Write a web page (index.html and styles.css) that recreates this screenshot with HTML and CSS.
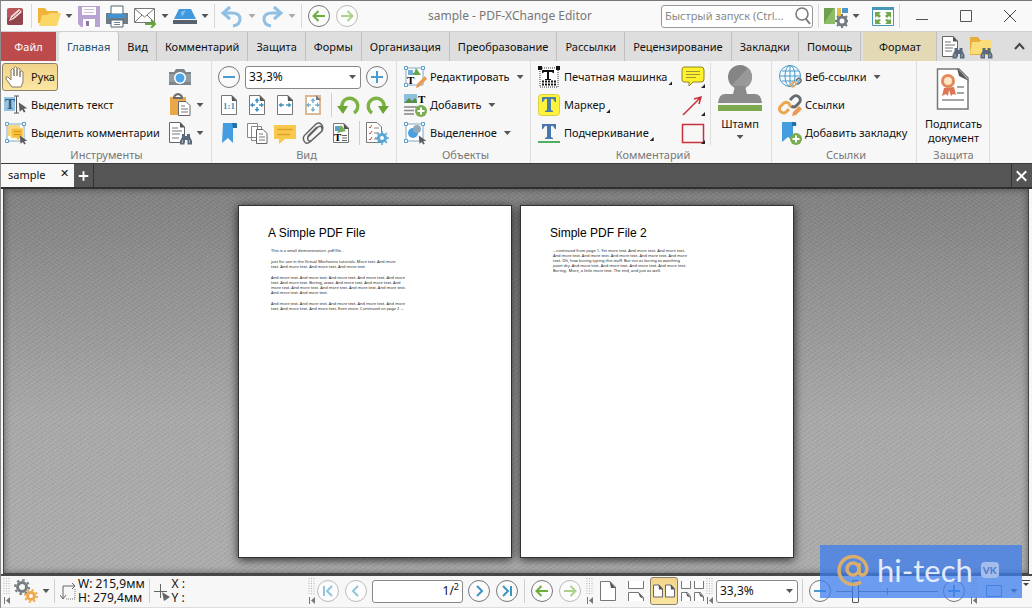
FILE: index.html
```html
<!DOCTYPE html>
<html lang="ru">
<head>
<meta charset="utf-8">
<title>sample - PDF-XChange Editor</title>
<link rel="stylesheet" href="styles.css">
</head>
<body>
<svg class="defs" aria-hidden="true">
  <defs>
    <symbol id="doc" viewBox="0 0 24 24"><path d="M4.500 2.500H15L19.500 7V21.500H4.500Z" fill="#fff" stroke="#777"/><path d="M14.500 2L20 8H15Z" fill="#555"/></symbol>
    <symbol id="bino" viewBox="0 0 12 12"><path d="M2 1h3v2h2V1h3v3l2 4v3.500H7.500V7h-3v4.500H0V8l2-4z" fill="#596a7b"/><path d="M2 7h1v3H2zM9 7h1v3H9z" fill="#a4b0bb"/></symbol>
    <symbol id="cursor" viewBox="0 0 12 12"><path d="M1 0L11 7L7 7.500L9 11L7 12L5 8.500L2 11Z" fill="#5c5c60"/></symbol>
    <symbol id="frame" viewBox="0 0 24 24"><path d="M3 3H20V20H3Z" fill="#fff" stroke="#7ca8c4"/><path d="M1.500 1.500h3v3h-3zM18.500 1.500h3v3h-3zM1.500 18.500h3v3h-3z" fill="#fff" stroke="#5b9fca"/></symbol>
    <symbol id="plusbadge" viewBox="0 0 12 12"><circle cx="6" cy="6" r="6" fill="#79ad50"/><path d="M6 2.500v7M2.500 6h7" stroke="#fff" stroke-width="2"/></symbol>
    <symbol id="minus" viewBox="0 0 24 24"><circle cx="12" cy="12" r="10.500" fill="#fafafa" stroke="#777"/><path d="M6 12h12" stroke="#4b9bd3" stroke-width="2"/></symbol>
    <symbol id="plus" viewBox="0 0 24 24"><circle cx="12" cy="12" r="10.500" fill="#fafafa" stroke="#777"/><path d="M6 12h12M12 6v12" stroke="#4b9bd3" stroke-width="2"/></symbol>
    <symbol id="back" viewBox="0 0 24 24"><circle cx="12" cy="12" r="10.500" fill="#fcfcfc" stroke="#777"/><path d="M18 12H7M11.500 7L6.500 12l5 5" fill="none" stroke="#6cae3b" stroke-width="2"/></symbol>
    <symbol id="fwd" viewBox="0 0 24 24"><circle cx="12" cy="12" r="10.500" fill="#fcfcfc" stroke="#bbb"/><path d="M6 12h11M12.500 7l5 5l-5 5" fill="none" stroke="#abd28c" stroke-width="2"/></symbol>
    <symbol id="grip" viewBox="0 0 8 30"><path d="M1 2v17M3.500 2v17M6 2v17" stroke="#b5b5b5" stroke-dasharray="1 1.500"/><path d="M1.500 21v7" stroke="#777"/><path d="M7 21v7L3 24.500z" fill="#777"/></symbol>
    <symbol id="arrows4" viewBox="0 0 24 24"><path d="M12 6v4M12 14v4M6 12h4M14 12h4" stroke="#3d91bd" stroke-width="1.500"/><path d="M9.500 8L12 5l2.500 3zM9.500 16L12 19l2.500-3zM8 9.500L5 12l3 2.500zM16 9.500l3 2.500l-3 2.500z" fill="#3d91bd"/></symbol>
    <symbol id="link" viewBox="0 0 24 24"><g fill="none" stroke-width="3"><path d="M12 7l3-3a4 4 0 0 1 6 6l-3 3a4 4 0 0 1-5 0" stroke="#66696d"/><path d="M11 16l-3 3a4 4 0 0 1-6-5l4-4a4 4 0 0 1 6 4" stroke="#eba652"/></g></symbol>
    <symbol id="page-s" viewBox="0 0 12 15"><path d="M1.500 1.500H7L10.500 5V13.500H1.500Z" fill="#fff" stroke="#666"/><path d="M6.500 1L11 6H7z" fill="#555"/></symbol>
  </defs>
</svg>
<div class="window">
  <header class="titlebar">
    <div class="quick">
      <svg class="i" viewBox="0 0 24 24"><rect x="1" y="4" width="16" height="17" rx="2" fill="#b9565a"/><path d="M1 15L17 6V19a2 2 0 0 1-2 2H3a2 2 0 0 1-2-2z" fill="#93444a"/><path d="M3 17l2-5l8-7l3 3l-8 7z" fill="#f1dcdd"/><path d="M5.500 14.500L14 7" stroke="#a84b50"/></svg>
      <span class="sep"></span>
      <button class="b" aria-label="Открыть"><svg class="i" viewBox="0 0 24 24"><path d="M1 4h7l2 3h11v12H1z" fill="#f1b33a"/><path d="M5 11h5l3-2h11l-4 13H2z" fill="#fbd768"/></svg></button><button class="dd" aria-label="Меню"></button>
      <button class="b" aria-label="Сохранить"><svg class="i" viewBox="0 0 24 24"><path d="M1 2h22v21H4l-3-3z" fill="#b9a3d3"/><path d="M5 3h14v8H5z" fill="#fdfcff"/><path d="M7 5.500h10M7 8.500h10" stroke="#c9c0d4"/><path d="M6 15h12v8H6z" fill="#fff"/><path d="M9 17h3v5H9z" fill="#8a78a3"/></svg></button>
      <button class="b g" aria-label="Печать"><svg class="i" viewBox="0 0 24 24"><path d="M1 9h22v11H1z" fill="#6f7b85"/><path d="M6 2h12v8H6z" fill="#fff" stroke="#57656f"/><path d="M3 10h18v4H3z" fill="#3f93d5"/><path d="M6 16h12v7H6z" fill="#fff" stroke="#57656f"/><path d="M9 18.500h6M9 20.500h6" stroke="#79858d"/></svg></button>
      <button class="b g" aria-label="Отправить"><svg class="i" viewBox="0 0 24 24"><path d="M1.500 4.500h20v14h-20z" fill="#fff" stroke="#777"/><path d="M2 5l9.500 8L21 5M2 18l7-7M21 18l-7-7" fill="none" stroke="#777"/><path d="M12 20h9M18 16l4 4l-4 4" stroke="#67a536" stroke-width="2" fill="none"/></svg></button><button class="dd" aria-label="Меню"></button>
      <button class="b" aria-label="Сканировать"><svg class="i" viewBox="0 0 24 24"><path d="M6 5h12l5 10H1z" fill="#4298dd"/><path d="M8 8L13 6L9 13z" fill="#7fc2f5"/><path d="M0 16h24v4H0z" fill="#56636e"/></svg></button><button class="dd" aria-label="Меню"></button>
      <span class="sep"></span>
      <button class="b" aria-label="Отменить"><svg class="i" viewBox="0 0 24 24"><path d="M4 9h8q8 0 8 6t-7 7" fill="none" stroke="#8fc0e3" stroke-width="3"/><path d="M10 3L3 9l7 6" fill="none" stroke="#8fc0e3" stroke-width="3"/></svg></button><button class="dd pale" aria-label="Меню"></button>
      <button class="b" aria-label="Повторить"><svg class="i" viewBox="0 0 24 24"><path d="M20 9h-8q-8 0-8 6t7 7" fill="none" stroke="#8fc0e3" stroke-width="3"/><path d="M14 3l7 6l-7 6" fill="none" stroke="#8fc0e3" stroke-width="3"/></svg></button><button class="dd pale" aria-label="Меню"></button>
      <span class="sep"></span>
      <button class="b" aria-label="Назад"><svg class="i"><use href="#back"/></svg></button>
      <button class="b g" aria-label="Вперёд"><svg class="i"><use href="#fwd"/></svg></button>
    </div>
    <h1 class="caption">sample - PDF-XChange Editor</h1>
    <div class="winside">
      <label class="search"><input type="text" aria-label="Быстрый запуск" placeholder="Быстрый запуск (Ctrl..."><svg class="i" viewBox="0 0 24 24"><circle cx="14" cy="10" r="6" fill="none" stroke="#777" stroke-width="1.500"/><path d="M18 15l4 5" stroke="#777" stroke-width="2"/></svg></label>
      <span class="sep even"></span>
      <button class="b" aria-label="Параметры"><svg class="i" viewBox="0 0 24 24"><path d="M0 4h11v16H0z" fill="#6d9f4c"/><path d="M0 19L10 4h1v16H0z" fill="#8dbd67"/><path d="M13 4h4v8h-4z" fill="#e6c046"/><path d="M18 4h6v5h-6z" fill="#4998d4"/><circle cx="18" cy="17" r="4" fill="#fff" stroke="#747a80" stroke-width="3"/><path d="M18 10v3M18 21v3M11 17h3M22 17h3M13 12l2 2M21 20l2 2M23 12l-2 2M15 20l-2 2" stroke="#747a80" stroke-width="2"/></svg></button><button class="dd" aria-label="Меню"></button>
      <button class="b full" aria-label="Во весь экран"><svg class="i" viewBox="0 0 24 24"><path d="M1.500 3.500h21v18h-21z" fill="#fff" stroke="#4796b7"/><path d="M1 3h22v3H1z" fill="#4796b7"/><path d="M4 8h6l-2 2l2 2l-2 2l-2-2l-2 2zM20 8h-6l2 2l-2 2l2 2l2-2l2 2zM4 20h6l-2-2l2-2l-2-1l-2 1l-2-1zM20 20h-6l2-2l-2-2l2-1l2 1l2-1z" fill="#6ea84b"/></svg></button>
      <span class="sep last"></span>
      <button class="win" aria-label="Свернуть"><svg class="i" viewBox="0 0 24 24"><path d="M6 15.500h12" stroke="#555"/></svg></button>
      <button class="win" aria-label="Развернуть"><svg class="i" viewBox="0 0 24 24"><path d="M6.500 6.500h11v11h-11z" fill="none" stroke="#555"/></svg></button>
      <button class="win" aria-label="Закрыть"><svg class="i" viewBox="0 0 24 24"><path d="M6 6l12 12M18 6L6 18" stroke="#444"/></svg></button>
    </div>
  </header>

  <nav class="tabs">
    <button class="tab file">Файл</button>
    <button class="tab on">Главная</button>
    <button class="tab">Вид</button>
    <button class="tab">Комментарий</button>
    <button class="tab">Защита</button>
    <button class="tab">Формы</button>
    <button class="tab">Организация</button>
    <button class="tab">Преобразование</button>
    <button class="tab">Рассылки</button>
    <button class="tab">Рецензирование</button>
    <button class="tab">Закладки</button>
    <button class="tab">Помощь</button>
    <button class="tab format">Формат</button>
    <div class="tabtools">
      <button class="b" aria-label="Найти"><svg class="i" viewBox="0 0 24 24"><path d="M1.500 1.500H12L16.500 6V21.500H1.500Z" fill="#fff" stroke="#666"/><path d="M12 1v5.500h5z" fill="#555"/><path d="M4 7h6M4 10h10M4 13h8M4 16h7" stroke="#777"/><use href="#bino" x="11" y="12" width="13" height="12"/></svg></button>
      <button class="b g" aria-label="Поиск"><svg class="i" viewBox="0 0 24 24"><path d="M1 2h8l2 3h9v15H1z" fill="#e9ad3c"/><path d="M3 7h7l3-2h9v14H1z" fill="#fbdc7b"/><use href="#bino" x="11" y="12" width="13" height="12"/></svg></button>
      <button class="b up" aria-label="Свернуть ленту"><svg class="i" viewBox="0 0 24 24"><path d="M7 14l4.500-5L16 14" fill="none" stroke="#444" stroke-width="2"/></svg></button>
    </div>
  </nav>

  <section class="ribbon">
    <div class="group">
      <div class="cols">
        <div class="col tools">
          <button class="cmd on"><svg class="i" viewBox="0 0 24 24"><path d="M8 22L2 14q-1-3 2-2l3 3V5q1.500-3 3 0V11V3q1.500-3 3 0V11V4q1.500-2 3 0v8V7q2-2 3 0v10l-2 5z" fill="#fff" stroke="#8a7a63"/></svg>Рука</button>
          <button class="cmd"><svg class="i" viewBox="0 0 24 24"><path d="M0 4h11v14H0z" fill="#93c4e6"/><text x="1" y="16" class="serif" fill="#375d7c">T</text><path d="M12.500 3v17M10 3h5M10 20h5" stroke="#555"/><use href="#cursor" x="14" y="8" width="10" height="13"/></svg>Выделить текст</button>
          <button class="cmd"><svg class="i" viewBox="0 0 24 24"><use href="#frame" width="24" height="24"/><path d="M4 4h12v11H4z" fill="#f8d57a"/><path d="M7 7h12v10h-3l-3 3v-3H7z" fill="#f5bf3a" stroke="#fbe4a5"/><path d="M10 10.500h7M10 13.500h7" stroke="#d8941c"/><use href="#cursor" x="15" y="14" width="9" height="10"/></svg>Выделить комментарии</button>
        </div>
        <div class="col">
          <button class="b" aria-label="Снимок"><svg class="i" viewBox="0 0 24 24"><path d="M1 7h5l2-3h8l2 3h5v13H1z" fill="#7d858b"/><path d="M1 9h22v8H1z" fill="#919a9f"/><circle cx="12" cy="13" r="6" fill="#fff"/><circle cx="12" cy="13" r="4.500" fill="#4ba4e5"/></svg></button>
          <div class="row"><button class="b" aria-label="Вставить"><svg class="i" viewBox="0 0 24 24"><path d="M2 4h16v18H2z" fill="#eaa748"/><path d="M6 5q0-3 4-4q4 1 4 4z" fill="#fff" stroke="#6b6b6b" stroke-width="2"/><path d="M10.500 8.500H18l4 4v10H10.500z" fill="#fff" stroke="#666"/><path d="M13 13h4M13 16h7M13 19h7" stroke="#777"/></svg></button><button class="dd" aria-label="Меню"></button></div>
          <div class="row"><button class="b" aria-label="Найти"><svg class="i" viewBox="0 0 24 24"><path d="M1.500 1.500H12L16.500 6V21.500H1.500Z" fill="#fff" stroke="#666"/><path d="M12 1v5.500h5z" fill="#555"/><path d="M4 7h6M4 10h10M4 13h8M4 17h7" stroke="#777"/><use href="#bino" x="12" y="12" width="12" height="12"/></svg></button><button class="dd" aria-label="Меню"></button></div>
        </div>
      </div>
      <h2>Инструменты</h2>
    </div>

    <div class="group view">
      <div class="col">
        <div class="row gap">
          <button class="b" aria-label="Уменьшить"><svg class="i"><use href="#minus"/></svg></button>
          <span class="combo"><select aria-label="Масштаб"><option>33,3%</option></select></span>
          <button class="b" aria-label="Увеличить"><svg class="i"><use href="#plus"/></svg></button>
        </div>
        <div class="row gap">
          <button class="b" aria-label="Реальный размер"><svg class="i" viewBox="0 0 24 24"><use href="#doc" width="24" height="24"/><text x="6" y="16" class="one" fill="#3d91bd">1:1</text></svg></button>
          <button class="b" aria-label="По странице"><svg class="i" viewBox="0 0 24 24"><use href="#doc" width="24" height="24"/><use href="#arrows4" width="24" height="24"/></svg></button>
          <button class="b" aria-label="По ширине"><svg class="i" viewBox="0 0 24 24"><use href="#doc" width="24" height="24"/><path d="M7 12h4M13 12h4" stroke="#3d91bd" stroke-width="1.500"/><path d="M8.500 9.500L5.500 12l3 2.500zM15.500 9.500l3 2.500l-3 2.500z" fill="#3d91bd"/></svg></button>
          <button class="b" aria-label="По видимому"><svg class="i" viewBox="0 0 24 24"><path d="M5 3h14v18H5z" fill="#fff" stroke="#dcb995" stroke-width="2"/><path d="M15 2l5 5h-5z" fill="#777"/><use href="#arrows4" width="24" height="24" opacity=".7"/></svg></button>
          <span class="rule"></span>
          <button class="b" aria-label="Повернуть влево"><svg class="i" viewBox="0 0 24 24"><path d="M5 15a8 8 0 1 1 12 5" fill="none" stroke="#7cb342" stroke-width="3.500"/><path d="M0 13h11l-5 8z" fill="#6aa536"/></svg></button>
          <button class="b" aria-label="Повернуть вправо"><svg class="i" viewBox="0 0 24 24"><path d="M19 15a8 8 0 1 0-12 5" fill="none" stroke="#7cb342" stroke-width="3.500"/><path d="M24 13H13l5 8z" fill="#6aa536"/></svg></button>
        </div>
        <div class="row gap">
          <button class="b" aria-label="Закладки"><svg class="i" viewBox="0 0 24 24"><path d="M6 2h14v4h-4v16l-5-5l-6 5z" fill="#439de0"/><path d="M15 2h4q2 2 1 5h-4z" fill="#2470aa"/></svg></button>
          <button class="b" aria-label="Миниатюры"><svg class="i" viewBox="0 0 24 24"><path d="M2.500 2.500h10v14h-10zM6.500 5.500h10v14h-10z" fill="#fff" stroke="#888"/><path d="M11.500 8.500H18l4 4v10H11.500z" fill="#fff" stroke="#666"/><path d="M14 13h4M14 16h6M14 19h6" stroke="#777"/></svg></button>
          <button class="b" aria-label="Комментарии"><svg class="i" viewBox="0 0 24 24"><path d="M1 4h22v14H12l-6 5v-5H1z" fill="#f8c94c"/><path d="M4 8.500h16M4 13.500h13" stroke="#dfa02c" stroke-width="1.500"/></svg></button>
          <button class="b" aria-label="Вложения"><svg class="i" viewBox="0 0 24 24"><path d="M7 16L17 6q3-2 4 1t-2 5L9 21q-4 3-6-1t2-7L15 3q3-2 5 0q3 3 1 7L11 19q-3 2-4 0t1-5l8-8" fill="none" stroke="#606060" stroke-width="1.500"/></svg></button>
          <button class="b" aria-label="Содержимое"><svg class="i" viewBox="0 0 24 24"><use href="#doc" width="24" height="24"/><path d="M8 12L12 4l5 6z" fill="#77ae55"/><path d="M6 5h5v5H6z" fill="#5b9fca"/><text x="5" y="20" class="small serif">T</text><path d="M13 14.500h5M13 17h5M13 19.500h5" stroke="#666"/></svg></button>
          <span class="rule"></span>
          <button class="b" aria-label="Параметры"><svg class="i" viewBox="0 0 24 24"><path d="M1.500 1.500H12L16.500 6V21.500H1.500Z" fill="#fff" stroke="#777"/><path d="M4 6l1 1l2-3M4 12l1 1l2-3M4 18l1 1l2-3" fill="none" stroke="#d34b3f"/><path d="M9 7h5M9 12h5M9 18h5" stroke="#888"/><circle cx="17" cy="17" r="3.500" fill="#fff" stroke="#5aa7d8" stroke-width="3"/><path d="M17 10v14M10 17h14M12 12l10 10M22 12L12 22" stroke="#5aa7d8" stroke-width="1.500"/><circle cx="17" cy="17" r="2" fill="#fff"/></svg></button>
        </div>
      </div>
      <h2>Вид</h2>
    </div>

    <div class="group objects">
      <div class="col">
        <button class="cmd tri"><svg class="i" viewBox="0 0 24 24"><use href="#frame" width="24" height="24"/><path d="M7 8h4l2-5l5 7H7z" fill="#68a64a"/><path d="M5 5h5v5H5z" fill="#73add7"/><text x="4" y="19" class="small serif">T</text><path d="M13 23l1-4l8-8l2 3l-8 8z" fill="#ed9952"/></svg>Редактировать</button>
        <button class="cmd tri"><svg class="i" viewBox="0 0 24 24"><path d="M1 1h13v9H1z" fill="#8dc0dd"/><path d="M1 10l5-5l3 3l3-3l2 3v2z" fill="#568e49"/><text x="15" y="10" class="small serif">T</text><path d="M1 14h13M1 17.500h10M1 21h10" stroke="#888" stroke-width="1.500"/><use href="#plusbadge" x="12" y="12" width="12" height="12"/></svg>Добавить</button>
        <button class="cmd tri"><svg class="i" viewBox="0 0 24 24"><use href="#frame" width="24" height="24"/><circle cx="10" cy="12" r="5" fill="#4aa1df"/><circle cx="14" cy="8" r="4" fill="#93a9ba"/><use href="#cursor" x="15" y="14" width="9" height="10"/></svg>Выделенное</button>
      </div>
      <h2>Объекты</h2>
    </div>

    <div class="group comment">
      <div class="cols">
        <div class="col marks">
          <button class="cmd corner"><svg class="i" viewBox="0 0 24 24"><path d="M3 3h18v19H3z" fill="#fff" stroke="#333" stroke-dasharray="1 1"/><path d="M1 1h4v4H1zM19 1h4v4h-4z" fill="#111"/><path d="M5 5h12v3h-1l-1-1h-3v7h2v1H8v-1h2V7H7L6 8H5z" fill="#111"/><path d="M5 16.500h14M5 19.500h14" stroke="#111" stroke-width="2" stroke-dasharray="2 1"/></svg>Печатная машинка</button>
          <button class="cmd corner"><svg class="i" viewBox="0 0 24 24"><rect x="1.500" y="1.500" width="21" height="21" rx="3" fill="#fff33c" stroke="#d8ce42"/><path d="M5 4h14v5h-1l-2-3h-2v11l2 1v1H8v-1l2-1V6H8L6 9H5z" fill="#4b7fa9"/></svg>Маркер</button>
          <button class="cmd corner"><svg class="i" viewBox="0 0 24 24"><path d="M5 3h14v5h-1l-2-3h-2v11l2 1v1H8v-1l2-1V5H8L6 8H5z" fill="#4977ac"/><path d="M1 21h22" stroke="#53ad62" stroke-width="2"/></svg>Подчеркивание</button>
        </div>
        <div class="col">
          <button class="b" aria-label="Заметка"><svg class="i" viewBox="0 0 24 24"><path d="M3 2h17q3 0 3 3v9q0 3-3 3h-8l-4 4v-4H3q-2 0-2-3V5q0-3 2-3z" fill="#fff22c" stroke="#8d861f"/><path d="M5 6.500h14M5 9.500h14M5 12.500h10" stroke="#9c9539"/><path d="M24 19v4h-4z" fill="#222"/></svg></button>
          <button class="b" aria-label="Стрелка"><svg class="i" viewBox="0 0 24 24"><path d="M2 22L19 5M13 6l7-2l-2 7" fill="none" stroke="#c6313b" stroke-width="1.500"/><path d="M24 19v4h-4z" fill="#222"/></svg></button>
          <button class="b" aria-label="Прямоугольник"><svg class="i" viewBox="0 0 24 24"><path d="M1.500 3.500h21v18h-21z" fill="none" stroke="#c6313b" stroke-width="1.500"/><path d="M24 19v4h-4z" fill="#222"/></svg></button>
        </div>
        <span class="tall"></span>
        <button class="big"><svg class="art" viewBox="0 0 48 48"><circle cx="24" cy="13" r="12" fill="#858585"/><path d="M24 1a12 12 0 0 1 0 24l-8-4L32 4z" fill="#999"/><path d="M19 22h10l2 8h8q6 0 7 9H2q1-9 7-9h8z" fill="#8b8b8b"/><path d="M2 41h44v6H2z" fill="#7ca84e"/><path d="M2 40h44" stroke="#eee"/></svg>Штамп<span class="arrow"></span></button>
      </div>
      <h2>Комментарий</h2>
    </div>

    <div class="group links">
      <div class="col">
        <button class="cmd tri"><svg class="i" viewBox="0 0 24 24"><g fill="none" stroke="#4b9bc8"><circle cx="12" cy="11" r="10.500" fill="#f4fbff"/><ellipse cx="12" cy="11" rx="5" ry="10.500"/><path d="M12 1v20M2 11h21M4 6h17M4 16h17"/></g><use href="#link" x="12" y="12" width="12" height="12"/></svg>Веб-ссылки</button>
        <button class="cmd"><svg class="i" viewBox="0 0 24 24"><use href="#link" width="24" height="24"/><path d="M14 23l1-4l6-6l3 3l-6 6z" fill="#ed9952"/></svg>Ссылки</button>
        <button class="cmd"><svg class="i" viewBox="0 0 24 24"><path d="M4 1h14v4h-3v15l-5-4l-6 5z" fill="#439de0"/><path d="M14 1h3q2 1 1 4h-4z" fill="#2470aa"/><use href="#plusbadge" x="12" y="12" width="12" height="12"/></svg>Добавить закладку</button>
      </div>
      <h2>Ссылки</h2>
    </div>

    <div class="group sign">
      <button class="big"><svg class="art" viewBox="0 0 48 48"><path d="M7.500 4H29L38 13V44H7.500Z" fill="#fff" stroke="#777" stroke-width="1.500"/><path d="M27 3l12 13l-10-5z" fill="#555"/><path d="M14 23l-2 8l4-2l2 2l1-6l2 6l2-2l3 1l-2-8z" fill="#dc7654"/><circle cx="18" cy="16" r="7" fill="#e38a5c"/><circle cx="18" cy="16" r="4" fill="#fce8c5"/><path d="M27 22h7M27 28h7M12 35h22" stroke="#888" stroke-width="1.500"/></svg>Подписать<br>документ</button>
      <h2>Защита</h2>
    </div>
  </section>

  <div class="doctabs">
    <button class="doctab">sample<span class="x">✕</span></button>
    <button class="new" aria-label="Новая вкладка"><svg viewBox="0 0 20 20"><path d="M5 10h10M10 5v10" stroke="#fff" stroke-width="2"/></svg></button>
    <button class="shut" aria-label="Закрыть"><svg viewBox="0 0 20 20"><path d="M5 5l10 10M15 5L5 15" stroke="#fff" stroke-width="2"/></svg></button>
  </div>

  <main class="canvas">
    <article class="page">
      <h3>A Simple PDF File</h3>
      <p>This is a small demonstration .pdf file -</p>
      <p>just for use in the Virtual Mechanics tutorials. More text. And more<br>text. And more text. And more text. And more text.</p>
      <p>And more text. And more text. And more text. And more text. And more<br>text. And more text. Boring, zzzzz. And more text. And more text. And<br>more text. And more text. And more text. And more text. And more text.<br>And more text. And more text.</p>
      <p>And more text. And more text. And more text. And more text. And more<br>text. And more text. And more text. Even more. Continued on page 2 ...</p>
    </article>
    <article class="page">
      <h3>Simple PDF File 2</h3>
      <p>...continued from page 1. Yet more text. And more text. And more text.<br>And more text. And more text. And more text. And more text. And more<br>text. Oh, how boring typing this stuff. But not as boring as watching<br>paint dry. And more text. And more text. And more text. And more text.<br>Boring. &nbsp;More, a little more text. The end, and just as well.</p>
    </article>
  </main>

  <footer class="status">
    <svg class="grip"><use href="#grip"/></svg>
    <button class="b" aria-label="Настройки"><svg class="i" viewBox="0 0 24 24"><g fill="none"><circle cx="8" cy="8" r="4.500" stroke="#777e82" stroke-width="3"/><circle cx="8" cy="8" r="7" stroke="#777e82" stroke-width="2" stroke-dasharray="2.500 3"/><circle cx="17" cy="17" r="3.500" stroke="#eda94b" stroke-width="3"/><circle cx="17" cy="17" r="6" stroke="#eda94b" stroke-width="2" stroke-dasharray="2 2.700"/></g></svg></button><button class="dd" aria-label="Меню"></button>
    <span class="rule"></span>
    <svg class="mini" viewBox="0 0 16 24"><path d="M3 19V7h12M0 16l3 4l3-4M12 4l3 3l-3 3" fill="none" stroke="#666"/><path d="M6 20h9V9" fill="none" stroke="#777" stroke-dasharray="1 1"/></svg>
    <div class="size">W: 215,9мм<br>H: 279,4мм</div>
    <span class="rule tight"></span>
    <svg class="mini" viewBox="0 0 16 24"><path d="M6.500 5v14M0 12.500h13" stroke="#666"/><path d="M8 13l8 5l-6 4z" fill="#666"/></svg>
    <div class="pos">X :<br>Y :</div>
    <div class="space"></div>
    <svg class="grip"><use href="#grip"/></svg>
    <div class="row gap">
      <button class="b" aria-label="Первая"><svg class="i" viewBox="0 0 24 24"><circle cx="12" cy="12" r="10.500" fill="#fcfcfc" stroke="#bbb"/><path d="M8 7v10M16 7l-5 5l5 5" fill="none" stroke="#91c5df" stroke-width="2"/></svg></button>
      <button class="b" aria-label="Предыдущая"><svg class="i" viewBox="0 0 24 24"><circle cx="12" cy="12" r="10.500" fill="#fcfcfc" stroke="#bbb"/><path d="M14 7l-5 5l5 5" fill="none" stroke="#91c5df" stroke-width="2"/></svg></button>
      <label class="pageno"><input type="text" value="1" aria-label="Страница"><span>/<sup>2</sup></span></label>
      <button class="b" aria-label="Следующая"><svg class="i" viewBox="0 0 24 24"><circle cx="12" cy="12" r="10.500" fill="#fcfcfc" stroke="#777"/><path d="M10 7l5 5l-5 5" fill="none" stroke="#3e95c3" stroke-width="2"/></svg></button>
      <button class="b" aria-label="Последняя"><svg class="i" viewBox="0 0 24 24"><circle cx="12" cy="12" r="10.500" fill="#fcfcfc" stroke="#777"/><path d="M16 7v10M8 7l5 5l-5 5" fill="none" stroke="#3e95c3" stroke-width="2"/></svg></button>
      <span class="rule flat"></span>
      <button class="b" aria-label="Назад"><svg class="i"><use href="#back"/></svg></button>
      <button class="b" aria-label="Вперёд"><svg class="i"><use href="#fwd"/></svg></button>
      <svg class="grip"><use href="#grip"/></svg>
    </div>
    <div class="row layouts">
      <button class="lay" aria-label="Одна страница"><svg class="i" viewBox="0 0 24 24"><path d="M4.500 2.500H14L19.500 8V21.500H4.500Z" fill="#fff" stroke="#777"/><path d="M13.500 2l6 7H15z" fill="#555"/></svg></button>
      <button class="lay" aria-label="Непрерывно"><svg class="i" viewBox="0 0 24 24"><path d="M4.500 2v7.500h15V2M4.500 22v-8.500h10l5 5V22" fill="#fff" stroke="#777"/><path d="M14 13l6 7l-4-2z" fill="#555"/></svg></button>
      <button class="lay on" aria-label="Две страницы"><svg class="i" viewBox="0 0 24 24"><use href="#page-s" x="0" y="4" width="12" height="16"/><use href="#page-s" x="12" y="4" width="12" height="16"/></svg></button>
      <button class="lay" aria-label="Две непрерывно"><svg class="i" viewBox="0 0 24 24"><path d="M1.500 2v7.500h9V2M14.500 2v7.500h9V2M1.500 22v-8.500h6l3 4V22M14.500 22v-8.500h6l3 4V22" fill="#fff" stroke="#777"/><path d="M6 13l5 6l-4-2zM19 13l5 6l-4-2z" fill="#555"/></svg></button>
      <svg class="grip"><use href="#grip"/></svg>
      <span class="combo"><select aria-label="Масштаб"><option>33,3%</option></select></span>
    </div>
    <span class="rule"></span>
    <div class="row gap zoom">
      <button class="b" aria-label="Уменьшить"><svg class="i"><use href="#minus"/></svg></button>
      <input type="range" class="slider" aria-label="Масштаб" min="0" max="100" value="17">
      <button class="b" aria-label="Увеличить"><svg class="i"><use href="#plus"/></svg></button>
      <svg class="grip"><use href="#grip"/></svg>
    </div>
    <button class="b" aria-label="Вид окна"><svg class="i" viewBox="0 0 24 24"><path d="M4.500 6.500h15v11h-15z" fill="#e4edf7" stroke="#5b86c4"/></svg></button><button class="dd" aria-label="Меню"></button>
    <svg class="more" viewBox="0 0 8 24"><path d="M0 1.500h8" stroke="#444"/><path d="M1 4h6l-3 3z" fill="#444"/></svg>
  </footer>
  <div class="badge">
    <svg class="at" viewBox="0 0 32 32"><g fill="none" stroke="#d9ad6c" stroke-width="3.500"><circle cx="16" cy="15" r="6"/><path d="M22 9v8q0 4 3.500 4t4.500-6a14 14 0 1 0-6 13"/></g></svg>
    <span>hi-tech</span>
    <b>VK</b>
  </div>
</div>
</body>
</html>
```

FILE: styles.css
```css
* { box-sizing: border-box; }
body { margin: 0; font-family: "Noto Sans", "Open Sans", sans-serif; font-size: 11px; line-height: 16px; color: #111; }
button, input, select { font: inherit; color: inherit; margin: 0; }
button { border: 0; padding: 0; background: none; }
h1, h2, h3, p { margin: 0; font-weight: 400; }
.defs { position: absolute; width: 0; height: 0; }
.window { position: relative; display: flex; flex-direction: column; height: 100vh; background: #f7f7f7; border-top: 1px solid #77767a; border-left: 1px solid #8b8b8b; }

.i { display: block; width: 24px; height: 24px; flex: none; }
.b { width: 24px; height: 24px; flex: none; }
.g { margin-left: 4px; }
.row { display: flex; align-items: center; height: 28px; }
.gap { gap: 4px; }
.col { display: flex; flex-direction: column; }
.col > .b { margin: 2px 0; }
.serif { font-family: "Liberation Serif", serif; font-size: 15px; font-weight: 700; }
.small { font-size: 11px; }
.one { font-family: "Liberation Serif", serif; font-size: 9px; font-weight: 700; }
.dd { display: grid; place-items: center; width: 16px; height: 24px; flex: none; }
.dd::after, .arrow, .combo::after, .tri::after { content: ""; width: 7px; height: 4px; background: #555; clip-path: polygon(0 0, 100% 0, 50% 100%); }
.dd.pale::after { background: #aaa; }
.sep { width: 1px; height: 24px; margin: 0 5px 0 1px; background: #d8d8d8; }
.even { margin: 0 5px; }
.last { margin: 0 0 0 4px; }
.rule { width: 1px; height: 24px; margin: 0 5px 0 0; background: #cfcfcf; }

.titlebar { display: flex; align-items: center; height: 30px; background: #f9f9f9; }
.quick { display: flex; align-items: center; padding-left: 5px; }
.caption { flex: 1; text-align: center; color: #777; font-size: 12px; }
.winside { display: flex; align-items: center; }
.search { display: flex; align-items: center; width: 152px; height: 23px; border: 1px solid #999; border-radius: 3px; background: #fff; padding-left: 3px; }
.search input { flex: 1; min-width: 0; border: 0; padding: 0; background: none; }
.search input::placeholder { color: #888; opacity: 1; }
.full { margin-left: 7px; }
.win { display: grid; place-items: center; width: 44px; height: 28px; }

.tabs { display: flex; height: 30px; background: #dedede; border-top: 1px solid #cfcfcf; }
.tab { flex: none; padding: 0 8px; border-right: 1px solid #c0c0c0; white-space: nowrap; }
.file { width: 55px; background: #bd4b4c; color: #fff; border-right: 0; margin-right: 3px; }
.tab.on { background: #f7f7f7; color: #20506f; border-radius: 3px 3px 0 0; }
.format { width: 74px; margin-left: 2px; background: #e3dab5; }
.tabtools { flex: 1; display: flex; align-items: center; padding-left: 4px; }
.up { margin-left: auto; }

.ribbon { display: grid; grid-template-columns: 211px 185px 134px 241px 145px 73px 1fr; height: 102px; background: #f7f7f7; }
.group { display: flex; flex-direction: column; padding: 2px 0 0 1px; border-right: 1px solid #ddd; }
.group h2 { margin-top: auto; text-align: center; font-size: 11px; line-height: 16px; color: #777; }
.cols { display: flex; }
.tools { width: 166px; }
.cmd { display: flex; align-items: center; align-self: flex-start; gap: 3px; height: 28px; padding: 0 2px 0 1px; border: 1px solid transparent; white-space: nowrap; }
.cmd.on, .lay.on { border: 1px solid #8b8169; border-radius: 3px; background: linear-gradient(#f1d48a, #fbe6a2); }
.tri::after { margin-left: 4px; }
.corner::after { content: ""; width: 4px; height: 4px; align-self: flex-end; margin: 0 0 5px -2px; background: #222; clip-path: polygon(100% 0, 100% 100%, 0 100%); }
.view { padding-left: 5px; }
.combo { display: grid; align-items: center; justify-items: end; width: 116px; font-size: 12px; }
.combo select { grid-area: 1 / 1; width: 100%; height: 23px; padding: 0 3px; appearance: none; border: 1px solid #888; border-radius: 3px; background: #fff; }
.combo::after { grid-area: 1 / 1; margin-right: 5px; pointer-events: none; }
.view .rule { margin: 0 1px 0 2px; }
.objects, .links, .comment { padding-left: 4px; }
.marks { width: 146px; }
.tall { width: 1px; height: 82px; margin: 0 3px 0 5px; background: #ddd; }
.big { display: flex; flex-direction: column; align-items: center; width: 52px; line-height: 14px; }
.art { width: 48px; height: 48px; margin: 1px 0 5px; }
.arrow { margin-top: 4px; }
.sign .big { display: block; width: 100%; }
.sign .art { display: block; margin: 2px auto 4px; }

.doctabs { display: flex; height: 26px; background: #555; border-top: 1px solid #3c3c3c; border-bottom: 2px solid #303030; }
.doctab { display: flex; gap: 14px; width: 73px; padding: 3px 0 0 7px; background: #f8f8f8; white-space: nowrap; }
.x { font-size: 11px; line-height: 12px; }
.new, .shut { display: grid; place-items: center; width: 20px; }
.new svg, .shut svg { width: 19px; height: 20px; }
.new { border-right: 1px solid #333; }
.shut { margin: 0 1px 0 auto; border-left: 1px solid #333; }

.canvas { flex: 1; display: flex; justify-content: center; gap: 8px; margin: 0 3px 0 2px; padding: 16px 0 15px; border: 1px solid #444; border-top: 0;
  background: repeating-linear-gradient(35deg, rgba(255,255,255,.07) 0 1px, transparent 1px 3px), repeating-linear-gradient(-35deg, rgba(0,0,0,.05) 0 1px, transparent 1px 4px), linear-gradient(#808080, #a8a8a8 60%, #acacac);
  box-shadow: inset 0 0 7px rgba(0,0,0,.45); }
.page { width: 274px; padding: 19px 0 0 29px; border: 1px solid #333; background: #fff; box-shadow: 0 2px 9px rgba(0,0,0,.75); color: #000; }
.page h3 { font-family: "Liberation Sans", sans-serif; font-size: 12px; line-height: 16px; margin-bottom: 7px; }
.page p { font-size: 4px; line-height: 5px; margin: 0 0 6px 3px; white-space: nowrap; color: #222; }

.status { display: flex; align-items: center; height: 34px; padding: 0 2px 1px 2px; background: #f7f7f7; border-top: 2px solid #484848; border-bottom: 1px solid #ddd; font-size: 12px; }
.grip { width: 8px; height: 30px; flex: none; }
.status > .b { margin-left: 3px; }
.mini { width: 16px; height: 24px; margin-right: 2px; }
.size, .pos { line-height: 14px; white-space: nowrap; }
.tight { margin: 0 4px; }
.space { flex: 1; }
.pageno { display: flex; align-items: center; width: 91px; height: 23px; padding-right: 3px; border: 1px solid #888; border-radius: 3px; background: #fff; }
.pageno input { flex: 1; min-width: 0; border: 0; padding: 0; background: none; text-align: right; }
.pageno sup { font-size: 9px; line-height: 0; }
.flat { margin: 0 1px; }
.lay { display: grid; place-items: center; width: 28px; height: 28px; }
.layouts .combo { width: 82px; margin: 0 4px 0 2px; }
.status .zoom { margin-right: 1px; }
.slider { width: 102px; height: 24px; appearance: none; background: linear-gradient(#777, #777) center / 100% 1px no-repeat, linear-gradient(#777, #777) center / 1px 7px no-repeat; }
.slider::-webkit-slider-thumb { appearance: none; width: 7px; height: 23px; border: 1px solid #555; border-radius: 1px; background: #f8f8f8; }
.more { width: 8px; height: 24px; }
.badge { position: absolute; right: 10px; bottom: 10px; display: flex; align-items: center; gap: 8px; width: 202px; height: 53px; padding: 0 0 4px 17px; background: rgba(61,126,238,.75); color: #e3eafa; font-family: Lato, sans-serif; font-size: 31px; line-height: 32px; pointer-events: none; }
.at { width: 32px; height: 32px; }
.badge b { width: 18px; height: 16px; border-radius: 4px; background: #a4bdec; color: #4d78cc; font-size: 10px; line-height: 16px; text-align: center; }
```
